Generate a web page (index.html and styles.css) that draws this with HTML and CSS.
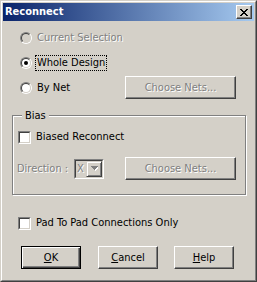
FILE: index.html
```html
<!DOCTYPE html>
<html lang="en">
<head>
    <meta charset="UTF-8">
    <meta name="viewport" content="width=device-width, initial-scale=1.0">
    <title>Reconnect</title>
    <link rel="stylesheet" href="styles.css">
</head>
<body>

    <div class="window">
        <div class="frame">

            <!-- Title Bar -->
            <div class="titlebar">
                <span class="title">Reconnect</span>
                <span class="close-btn">
                    <svg width="8" height="7" viewBox="0 0 8 7" shape-rendering="crispEdges">
                        <path d="M0 0h2v1h-2zM6 0h2v1h-2zM1 1h2v1h-2zM5 1h2v1h-2zM2 2h4v1h-4zM3 3h2v1h-2zM2 4h4v1h-4zM1 5h2v1h-2zM5 5h2v1h-2zM0 6h2v1h-2zM6 6h2v1h-2z" fill="#000"/>
                    </svg>
                </span>
            </div>

            <div class="content">
                <div class="option-row disabled">
                    <span class="radio"><span class="radio-inner"></span></span>
                    <span class="label">Current Selection</span>
                </div>
                <div class="option-row">
                    <span class="radio"><span class="radio-inner checked"></span></span>
                    <span class="label focused">Whole Design</span>
                </div>
                <div class="option-row">
                    <span class="radio"><span class="radio-inner"></span></span>
                    <span class="label">By Net</span>
                    <button class="btn choose-btn" disabled>Choose Nets...</button>
                </div>

                <!-- Bias Group -->
                <fieldset class="group">
                    <legend>Bias</legend>
                    <div class="check-row">
                        <span class="checkbox"><span class="checkbox-inner"></span></span>
                        <span class="label">Biased Reconnect</span>
                    </div>
                    <div class="direction-row">
                        <span class="direction-label">Direction :</span>
                        <span class="combo">
                            <span class="combo-inner">
                                <span class="combo-value">X</span>
                                <span class="combo-arrow">
                                    <svg width="7" height="5" viewBox="0 0 7 5" shape-rendering="crispEdges">
                                        <path d="M1 1h7v1h-1v1h-1v1h-1v1h-1v-1h-1v-1h-1v-1h-1z" fill="#fff"/>
                                        <path d="M0 0h7v1h-1v1h-1v1h-1v1h-1v-1h-1v-1h-1v-1h-1z" fill="#808080"/>
                                    </svg>
                                </span>
                            </span>
                        </span>
                        <button class="btn choose-btn" disabled>Choose Nets...</button>
                    </div>
                </fieldset>

                <div class="check-row pad-row">
                    <span class="checkbox"><span class="checkbox-inner"></span></span>
                    <span class="label">Pad To Pad Connections Only</span>
                </div>

                <div class="button-row">
                    <button class="btn default-btn"><u>O</u>K</button>
                    <button class="btn"><u>C</u>ancel</button>
                    <button class="btn"><u>H</u>elp</button>
                </div>
            </div>

        </div>
    </div>

</body>
</html>
```

FILE: styles.css
```css
/* General Styles */
body {
    margin: 0;
    padding: 0;
    font-family: "DejaVu Sans Condensed", "Liberation Sans", sans-serif;
    font-size: 11px;
    color: #000;
}
.window {
    width: 257px;
    height: 282px;
    box-sizing: border-box;
    background-color: #D4D0C8;
    border: 1px solid;
    border-color: #D4D0C8 #404040 #404040 #D4D0C8;
}
.frame {
    height: 100%;
    box-sizing: border-box;
    border: 1px solid;
    border-color: #fff #808080 #808080 #fff;
    padding: 1px;
    display: flex;
    flex-direction: column;
}

/* Title Bar */
.titlebar {
    height: 18px;
    flex: none;
    display: flex;
    align-items: center;
    justify-content: space-between;
    padding-left: 2px;
    background: linear-gradient(to right, #0A246A, #A6CAF0);
}
.title {
    color: #fff;
    font-weight: bold;
    line-height: 14px;
}
.close-btn {
    width: 16px;
    height: 14px;
    box-sizing: border-box;
    margin-right: 2px;
    display: flex;
    align-items: center;
    justify-content: center;
    background-color: #D4D0C8;
    border: 1px solid;
    border-color: #fff #404040 #404040 #fff;
    box-shadow: inset -1px -1px #808080;
}
.close-btn svg {
    display: block;
    margin-left: -1px;
}

/* Content */
.content {
    padding: 4px 8px 0 9px;
}
.option-row {
    height: 25px;
    display: flex;
    align-items: center;
}
.label {
    margin-left: 5px;
    line-height: 14px;
    white-space: nowrap;
}
.label.focused {
    margin-left: 3px;
    padding: 1px 2px;
    outline: 1px dotted #000;
    outline-offset: -1px;
}
.disabled .label,
.direction-label,
.btn:disabled {
    color: #808080;
    text-shadow: 1px 1px 0 #fff;
}

/* Radio buttons */
.radio {
    width: 12px;
    height: 12px;
    margin-left: 8px;
    flex: none;
    box-sizing: border-box;
    border-radius: 50%;
    border: 1px solid;
    border-color: #808080 #fff #fff #808080;
}
.radio-inner {
    display: flex;
    align-items: center;
    justify-content: center;
    width: 100%;
    height: 100%;
    box-sizing: border-box;
    border-radius: 50%;
    border: 1px solid;
    border-color: #404040 #D4D0C8 #D4D0C8 #404040;
    background-color: #fff;
}
.disabled .radio-inner {
    background-color: #D4D0C8;
}
.radio-inner.checked::after {
    content: '';
    width: 4px;
    height: 4px;
    border-radius: 50%;
    background-color: #000;
}

/* Checkboxes */
.checkbox {
    width: 13px;
    height: 13px;
    flex: none;
    box-sizing: border-box;
    border: 1px solid;
    border-color: #808080 #fff #fff #808080;
}
.checkbox-inner {
    display: block;
    width: 100%;
    height: 100%;
    box-sizing: border-box;
    border: 1px solid;
    border-color: #404040 #D4D0C8 #D4D0C8 #404040;
    background-color: #fff;
}
.check-row {
    height: 20px;
    display: flex;
    align-items: center;
    margin-top: 5px;
}

/* Buttons */
.btn {
    width: 60px;
    height: 23px;
    box-sizing: border-box;
    padding: 0;
    font: inherit;
    color: #000;
    background-color: #D4D0C8;
    border: 1px solid;
    border-color: #fff #404040 #404040 #fff;
    box-shadow: inset -1px -1px #808080;
    border-radius: 0;
}
.btn u {
    text-decoration-thickness: 1px;
    text-underline-offset: 1px;
}
.default-btn {
    border-color: #000;
    box-shadow: inset 1px 1px #fff, inset -1px -1px #404040, inset -2px -2px #808080;
}
.choose-btn {
    width: 111px;
    margin-left: auto;
    margin-right: 10px;
}

/* Bias group box */
.group {
    margin: 9px 0 0 0;
    padding: 0 9px 14px 5px;
    border: 1px solid #808080;
    box-shadow: inset 1px 1px #fff, 1px 1px #fff;
    min-inline-size: 0;
}
.group legend {
    margin-left: 4px;
    padding: 0 3px;
    line-height: 13px;
    background-color: #D4D0C8;
}
.group .choose-btn {
    margin-right: 0;
}
.direction-row {
    height: 23px;
    margin-top: 10px;
    display: flex;
    align-items: center;
}
.direction-label {
    width: 57px;
    margin-left: -1px;
    flex: none;
    white-space: nowrap;
}
.combo {
    width: 30px;
    height: 20px;
    flex: none;
    box-sizing: border-box;
    border: 1px solid;
    border-color: #808080 #fff #fff #808080;
}
.combo-inner {
    display: flex;
    height: 100%;
    box-sizing: border-box;
    border: 1px solid;
    border-color: #404040 #D4D0C8 #D4D0C8 #404040;
}
.combo-value {
    flex: 1;
    padding-left: 1px;
    line-height: 16px;
    color: #808080;
    text-shadow: 1px 1px 0 #fff;
}
.combo-arrow {
    width: 16px;
    height: 16px;
    box-sizing: border-box;
    display: flex;
    align-items: center;
    justify-content: center;
    border: 1px solid;
    border-color: #D4D0C8 #404040 #404040 #D4D0C8;
    box-shadow: inset 1px 1px #fff, inset -1px -1px #808080;
}
.combo-arrow svg {
    display: block;
}

.pad-row {
    margin-top: 18px;
    padding-left: 6px;
}
.button-row {
    display: flex;
    margin-top: 13px;
    padding-left: 9px;
}
.button-row .btn + .btn {
    margin-left: 17px;
}
.button-row .btn:last-child {
    margin-left: 16px;
}
```
